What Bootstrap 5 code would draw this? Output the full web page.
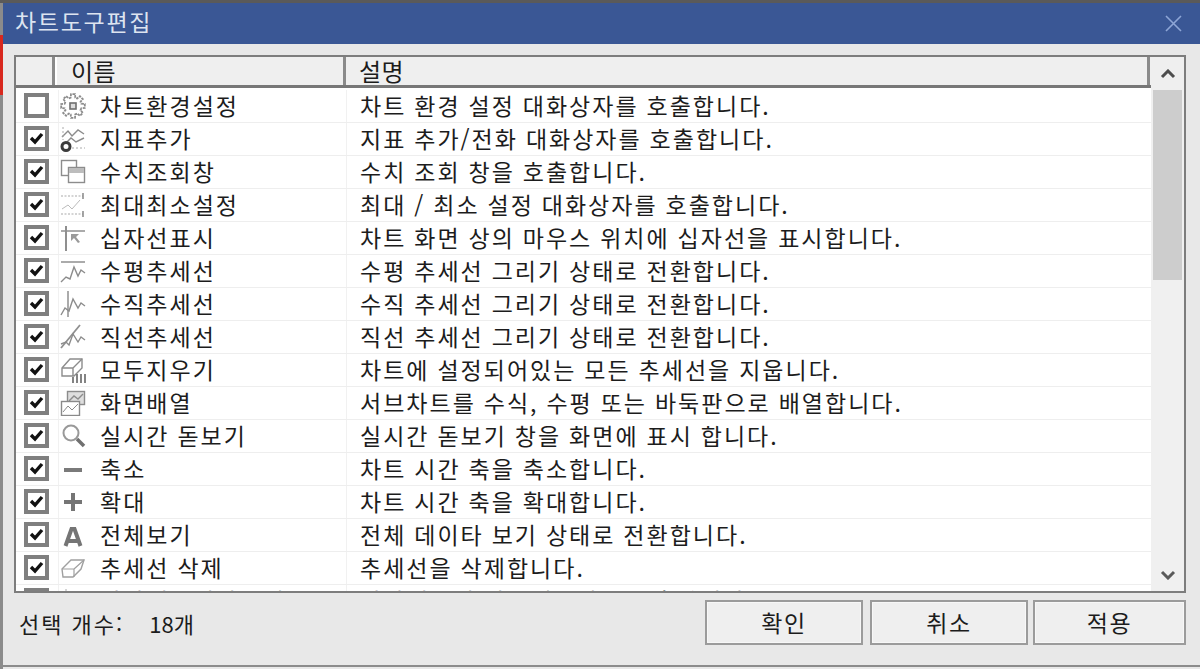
<!DOCTYPE html>
<html lang="ko"><head><meta charset="utf-8"><title>차트도구편집</title>
<link href="https://cdn.jsdelivr.net/npm/bootstrap@5.3.0/dist/css/bootstrap.min.css" rel="stylesheet">
<style>
html,body{margin:0;height:669px;overflow:hidden;background:#e8e8e8}
body{font-family:"Noto Sans CJK KR","Liberation Sans",sans-serif;color:#1c1c1c;font-size:23px;letter-spacing:2px;word-spacing:-.5px}
.edge-top{height:3px;background:#5a5a5a}
.dlg-wrap{height:666px}
.edge-left{width:3px;background:#8b8b8b;position:relative}
.red-tab{position:absolute;left:0;top:32px;width:3px;height:60px;background:#d8281e}
.dlg{min-width:0}
.title-bar{height:41px;background:#3a5795;color:#dde4f0;padding:0 0 4px 12px;font-size:23px;letter-spacing:1.7px}
.close-x{margin-right:17px;margin-top:4px}
.dlg-body{padding:11px 14px 0 11px}
.grid-frame{height:538px;border:2px solid #7d7d7d;background:#fff;overflow:hidden}
.grid-main{width:1137px}
.grid-head{height:31px;background:#efefef;border-bottom:3px solid #777;font-size:24px;line-height:28px;letter-spacing:.5px}
.hc{border-right:3px solid #8a8a8a;height:28px}
.hc-chk{width:39px}
.hc-name{width:291px;padding-left:16px;box-shadow:inset 2px 0 0 #fff}
.hc-desc{width:804px;padding-left:13px}
.grid-row{height:33px;border-bottom:1px solid #eee;line-height:31px;flex:none;white-space:nowrap}
.c-chk{width:42px;height:32px;padding-left:8px}
.c-ico{width:42px;height:32px;border-left:1px solid #f1f1f1;padding-left:1px}
.c-name{width:246px}
.c-desc{border-left:1px solid #f1f1f1;padding-left:13px;flex:1}
.chkbox{width:25px;height:25px;border:4px solid #7f7f7f;background:#fff;margin-top:3px}
.chkbox svg{display:block}
.ico{display:block;margin-top:3px}
.rows{height:504px;overflow:hidden;padding-top:2px}
.sbar{width:33px;background:#f0f0f0}
.sbtn{height:33px;background:#efefef}
.sthumb{height:190px;background:#cdcdcd;margin:0 2px 0 2px}
.sbot{position:absolute;left:0;right:0;bottom:0;background:#f0f0f0}
.foot{padding-top:7px}
.cnt{font-size:22px;letter-spacing:2.1px;padding:7px 0 0 5px}
.cnt-num{margin-left:25px;letter-spacing:0}
.btn-dlg{width:158px;height:45px;border:2px solid #9b9b9b;border-radius:0;background:#efefef;color:#1c1c1c;font-size:23px;letter-spacing:1.5px;padding:0;line-height:37px;box-shadow:inset 0 0 0 1px #f7f7f7}
.btn-dlg:hover{background:#efefef;border-color:#9b9b9b;color:#1c1c1c}
.btn-ok{margin-right:7px}
.btn-cancel{margin-right:5px}
.btn-apply{width:153px}
.edge-bot{position:absolute;left:3px;right:0;top:665px;height:2px;background:#8b8b8b}
</style></head><body>
<div class="edge-top"></div>
<div class="d-flex dlg-wrap">
<div class="edge-left"><span class="red-tab"></span></div>
<div class="dlg flex-grow-1">
<div class="title-bar d-flex align-items-center justify-content-between">
<span>차트도구편집</span>
<svg class="close-x" width="19" height="19" viewBox="0 0 19 19"><path d="M2 2 17 17M17 2 2 17" stroke="#8ea6d6" stroke-width="1.6" fill="none"/></svg>
</div>
<div class="dlg-body">
<div class="grid-frame d-flex">
<div class="grid-main flex-none">
<div class="grid-head d-flex">
<div class="hc hc-chk"></div><div class="hc hc-name">이름</div><div class="hc hc-desc">설명</div>
</div>
<div class="rows" id="rows"></div>
</div>
<div class="sbar flex-grow-1 position-relative">
<div class="sbtn d-flex align-items-center justify-content-center"><svg width="16" height="10" viewBox="0 0 16 10"><path d="M2 8 8 2 14 8" stroke="#4d4d4d" stroke-width="3" fill="none"/></svg></div>
<div class="sthumb"></div>
<div class="sbtn sbot d-flex align-items-center justify-content-center"><svg width="16" height="10" viewBox="0 0 16 10"><path d="M2 2 8 8 14 2" stroke="#5a5a5a" stroke-width="3" fill="none"/></svg></div>
</div>
</div>
<div class="foot d-flex justify-content-between">
<div class="cnt">선택 개수:<span class="cnt-num">18개</span></div>
<div class="d-flex"><button class="btn btn-dlg btn-ok">확인</button><button class="btn btn-dlg btn-cancel">취소</button><button class="btn btn-dlg btn-apply">적용</button></div>
</div>
</div>
</div>
</div>
<div class="edge-bot"></div>
<script>
const g='stroke="#8c8c8c" fill="none" stroke-width="1.4"';
function gearPath(){let p=[];const n=8;for(let i=0;i<n;i++){const a=i*2*Math.PI/n;[[-.27,8.6],[-.17,12],[.17,12],[.27,8.6]].forEach(([d,r])=>{p.push((13+r*Math.cos(a+d)).toFixed(1)+' '+(13+r*Math.sin(a+d)).toFixed(1))})}return 'M'+p.join('L')+'Z'}
const I={
gear:`<path d="${gearPath()}" fill="#fff" stroke="#8c8c8c" stroke-width="1.8" stroke-dasharray="2.6 .9"/><rect x="10" y="10" width="6" height="6" fill="#ddd" stroke="#6f6f6f" stroke-width="1.6"/>`,
add:`<path d="M2 11 8 5 12 10 18 4 24 8" ${g}/><path d="M7 16 11 12 16 16 24 12" ${g}/><path d="M3 1V14M12 22H25" stroke="#aaa" fill="none" stroke-dasharray="2 2"/><circle cx="6" cy="20.5" r="4" fill="none" stroke="#3c3c3c" stroke-width="3"/>`,
win:`<rect x="1.5" y="1.5" width="15" height="15" ${g}/><rect x="8.5" y="8.5" width="16" height="15" fill="#fff" stroke="#8c8c8c" stroke-width="1.4"/><rect x="9" y="9" width="15" height="5" fill="#bdbdbd"/>`,
minmax:`<path d="M1 4H23M1 22H23" stroke="#aaa" stroke-width="1.2" stroke-dasharray="2 1.5" fill="none"/><path d="M23 1V7M23 19V25" stroke="#888" stroke-width="1.5"/><path d="M2 17 8 13 12 17 20 8" stroke="#bbb" fill="none"/>`,
cross:`<path d="M6 1V26" stroke="#8f8f8f" stroke-width="2"/><path d="M1 6H25" stroke="#8f8f8f" stroke-width="1.5"/><path d="M11 9H19L16 12 20 17 18 18 14 13 11 16Z" fill="#9a9a9a"/>`,
horiz:`<path d="M1 4H25" stroke="#8f8f8f" stroke-width="1.5"/><path d="M1 24 6 19 10 21 14 9 18 18 21 12 25 15" ${g}/>`,
vert:`<path d="M8 0V26" stroke="#8f8f8f" stroke-width="1.5"/><path d="M1 24 5 17 9 20 13 8 18 17 21 12 25 15" ${g}/>`,
line:`<path d="M1 24 20 1" stroke="#8f8f8f" stroke-width="1.8"/><path d="M1 20 6 18 9 21 13 10 18 18 21 13 25 16" ${g}/>`,
era:`<path d="M2 11 10 2H22V11L14 19H2Z" fill="#fff" ${g} stroke-width="1.5"/><path d="M2 11H13V19M13 11 22 2" ${g}/><path d="M13 26V20M17 26V17M21 26V17M25 26V17" stroke="#777" stroke-width="1.8"/>`,
arr:`<rect x="7.5" y="1.5" width="17" height="13" fill="#dedede" ${g}/><path d="M9 11 14 6 18 9 23 4" ${g}/><rect x="1.5" y="11.5" width="18" height="14" fill="#fff" stroke="#8a8a8a" stroke-width="1.4"/><path d="M3 22 8 16 12 20 18 14" stroke="#8a8a8a" fill="none"/>`,
mag:`<circle cx="11" cy="10" r="7.5" fill="#fff" stroke="#999" stroke-width="2"/><path d="M17 16 24 23" stroke="#707070" stroke-width="3.5"/>`,
minus:`<rect x="4" y="12" width="18" height="4" fill="#7a7a7a"/>`,
plus:`<path d="M4 13H22M13 4V22" stroke="#757575" stroke-width="4"/>`,
a:`<path d="M5.5 24 11.5 7H14.5L20.5 24M8.5 19H17.5" stroke="#757575" stroke-width="4" fill="none"/>`,
er2:`<path d="M2 14 11 5H24L21 14 13 22H3Z" fill="#fff" stroke="#a0a0a0" stroke-width="1.4"/><path d="M2 14H14V22M14 14 24 5" stroke="#a0a0a0" fill="none" stroke-width="1.2"/>`,
doc:`<path d="M6 1V26" stroke="#aaa"/>`
};
const R=[[0,'gear','차트환경설정','차트 환경 설정 대화상자를 호출합니다.'],[1,'add','지표추가','지표 추가/전화 대화상자를 호출합니다.'],[1,'win','수치조회창','수치 조회 창을 호출합니다.'],[1,'minmax','최대최소설정','최대 / 최소 설정 대화상자를 호출합니다.'],[1,'cross','십자선표시','차트 화면 상의 마우스 위치에 십자선을 표시합니다.'],[1,'horiz','수평추세선','수평 추세선 그리기 상태로 전환합니다.'],[1,'vert','수직추세선','수직 추세선 그리기 상태로 전환합니다.'],[1,'line','직선추세선','직선 추세선 그리기 상태로 전환합니다.'],[1,'era','모두지우기','차트에 설정되어있는 모든 추세선을 지웁니다.'],[1,'arr','화면배열','서브차트를 수식, 수평 또는 바둑판으로 배열합니다.'],[1,'mag','실시간 돋보기','실시간 돋보기 창을 화면에 표시 합니다.'],[1,'minus','축소','차트 시간 축을 축소합니다.'],[1,'plus','확대','차트 시간 축을 확대합니다.'],[1,'a','전체보기','전체 데이타 보기 상태로 전환합니다.'],[1,'er2','추세선 삭제','추세선을 삭제합니다.'],[1,'doc','따라대화면상호재화','따라대화면 상호재화상을 호출합니다.']];
document.getElementById('rows').innerHTML=R.map(r=>`<div class="grid-row d-flex"><div class="c-chk"><div class="chkbox">${r[0]?'<svg width="17" height="17" viewBox="0 0 17 17"><path d="M3 8 7 12 14 4" stroke="#111" stroke-width="3.4" fill="none"/></svg>':''}</div></div><div class="c-ico"><svg class="ico" width="26" height="26" viewBox="0 0 26 26">${I[r[1]]}</svg></div><div class="c-name">${r[2]}</div><div class="c-desc">${r[3]}</div></div>`).join('');
</script>
<script src="https://cdn.jsdelivr.net/npm/bootstrap@5.3.0/dist/js/bootstrap.bundle.min.js"></script>
</body></html>
